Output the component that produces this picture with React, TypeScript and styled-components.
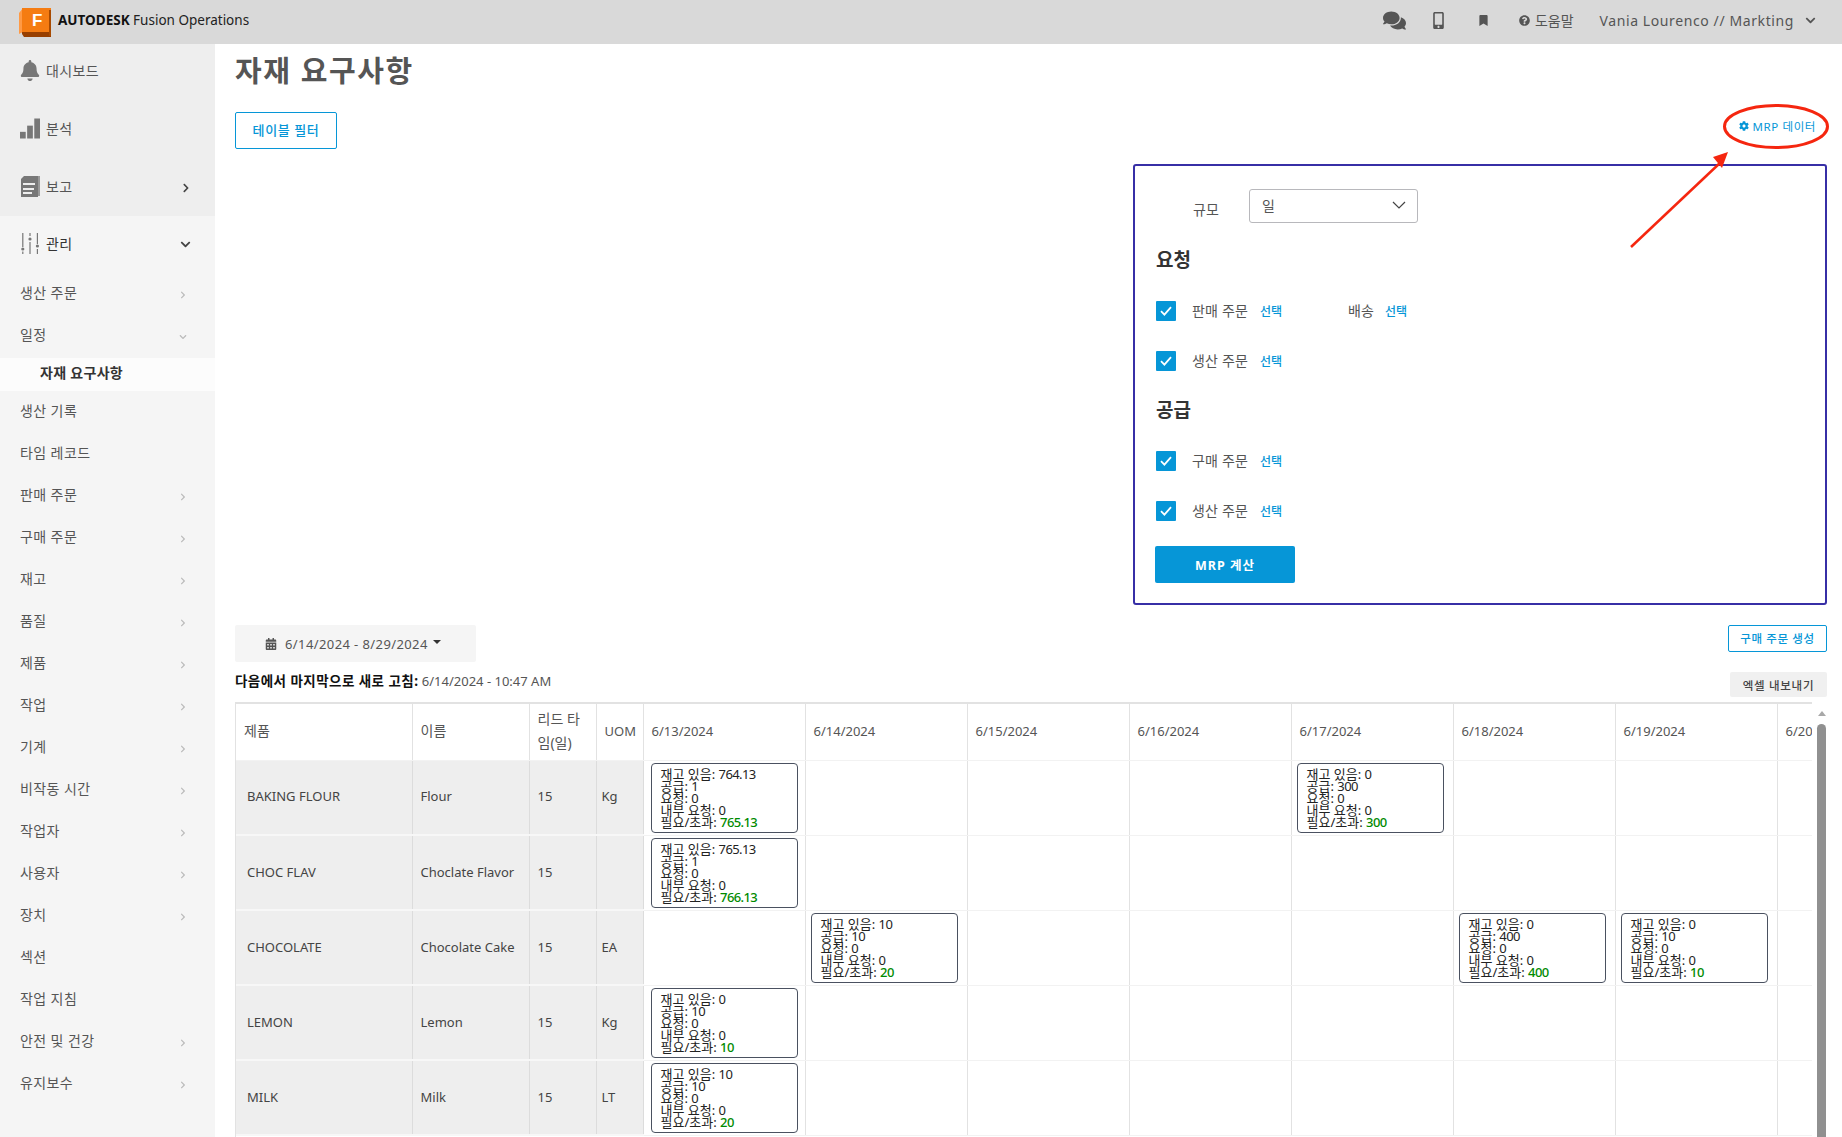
import React from "react";
import styled, { createGlobalStyle } from "styled-components";
import {
  FaBell,
  FaBookmark,
  FaCalendarAlt,
  FaChevronDown,
  FaChevronRight,
  FaCog,
  FaComments,
  FaMobileAlt,
  FaQuestionCircle,
} from "react-icons/fa";

const GlobalStyle = createGlobalStyle`
  html, body {
    margin: 0;
    padding: 0;
    height: 100%;
    overflow: hidden;
    background: #fff;
    font-family: "Noto Sans", "Noto Sans CJK KR", sans-serif;
    color: #555;
  }
  * { box-sizing: border-box; }
`;

const Page = styled.div`
  width: 1842px;
  height: 1137px;
  position: relative;
  overflow: hidden;
  display: flex;
  flex-direction: column;
`;

/* top bar */
const TopBar = styled.header`
  height: 44px;
  flex: none;
  background: #d9d9d9;
  display: flex;
  align-items: center;
  padding-left: 19px;
`;

const Brand = styled.div`
  display: flex;
  align-items: center;
  gap: 7px;
  font-size: 13.5px;
  color: #222;
  white-space: nowrap;
  span {
    padding-bottom: 5px;
  }
  b {
    font-weight: 700;
    color: #111;
  }
`;

const TopActions = styled.div`
  margin-left: auto;
  display: flex;
  align-items: center;
  color: #555;
  padding: 0 26px 4px 0;
`;

const TopIcon = styled.span<{ $gap: number }>`
  display: flex;
  align-items: center;
  margin-right: ${(p) => p.$gap}px;
`;

const HelpLink = styled.span`
  display: flex;
  align-items: center;
  gap: 5px;
  font-size: 14px;
  margin-right: 26px;
`;

const UserName = styled.span`
  font-size: 14px;
  letter-spacing: 0.6px;
  margin-right: 11px;
  white-space: nowrap;
`;

/* sidebar */
const Body = styled.div`
  flex: 1;
  display: flex;
  min-height: 0;
`;

const Sidebar = styled.nav`
  width: 215px;
  flex: none;
  background: #f5f5f5;
  font-size: 14px;
  letter-spacing: 0.4px;
`;

const TopGroup = styled.div`
  height: 172px;
  background: #eeeeee;
`;

const MainItem = styled.div<{ $strong?: boolean }>`
  height: ${(p) => (p.$strong ? 57 : 58)}px;
  padding: 0 24px ${(p) => (p.$strong ? 3 : 6)}px 20px;
  display: flex;
  align-items: center;
  gap: 6px;
  color: ${(p) => (p.$strong ? "#333" : "#555")};
`;

const MainIcon = styled.span`
  width: 20px;
  height: 22px;
  display: flex;
  align-items: center;
  justify-content: center;
  color: #777;
`;

const Chevron = styled.span<{ $faint?: boolean }>`
  margin: ${(p) => (p.$faint ? 5 : 3)}px 0 0 auto;
  display: flex;
  color: ${(p) => (p.$faint ? "#bbb" : "#444")};
`;

const SubItem = styled.div`
  height: 42px;
  padding: 0 28px 4px 20px;
  display: flex;
  align-items: center;
`;

const ActiveSub = styled.div`
  height: 33px;
  margin-top: 1px;
  padding: 0 0 6px 40px;
  background: #fcfcfc;
  display: flex;
  align-items: center;
  font-weight: 700;
  font-size: 14px;
  letter-spacing: 0.3px;
  color: #333;
`;

/* content */
const Main = styled.main`
  flex: 1;
  min-width: 0;
  padding: 6px 15px 0 20px;
`;

const Title = styled.h1`
  margin: 0;
  height: 40px;
  line-height: 42px;
  font-size: 29px;
  font-weight: 700;
  letter-spacing: 1.6px;
  color: #555;
`;

const FilterRow = styled.div`
  margin-top: 22px;
  display: flex;
  justify-content: space-between;
`;

const OutlineButton = styled.button<{ $h: number; $w: number; $size: number }>`
  width: ${(p) => p.$w}px;
  height: ${(p) => p.$h}px;
  padding: 0 0 2px;
  background: #fff;
  border: 1px solid #0696d7;
  border-radius: 2px;
  color: #0696d7;
  font-family: inherit;
  font-size: ${(p) => p.$size}px;
  font-weight: 500;
  letter-spacing: 0.6px;
`;

const DataLink = styled.span`
  display: flex;
  align-items: center;
  gap: 4px;
  height: 28px;
  padding-right: 11px;
  font-size: 11.5px;
  letter-spacing: 0.6px;
  color: #0696d7;
`;

const PanelRow = styled.div`
  margin-top: 15px;
  display: flex;
  justify-content: flex-end;
`;

const Panel = styled.section`
  width: 694px;
  height: 441px;
  border: 2px solid #372fa6;
  border-radius: 3px;
  padding: 23px 0 0 21px;
`;

const ScaleRow = styled.div`
  display: flex;
  height: 34px;
`;

const ScaleLabel = styled.span`
  margin: 10px 0 0 37px;
  width: 56px;
  font-size: 14px;
  line-height: 22px;
`;

const Select = styled.div`
  width: 169px;
  height: 34px;
  padding: 0 11px 2px 12px;
  border: 1px solid #b8b8bc;
  border-radius: 3px;
  display: flex;
  align-items: center;
  justify-content: space-between;
  font-size: 14px;
`;

const SectionHead = styled.h3<{ $top: number }>`
  margin: ${(p) => p.$top}px 0 0;
  height: 24px;
  line-height: 26px;
  font-size: 19px;
  font-weight: 700;
  color: #333;
`;

const CheckRow = styled.div`
  margin-top: 30px;
  height: 20px;
  display: flex;
  align-items: center;
  font-size: 14px;
`;

const CheckBox = styled.span`
  width: 20px;
  height: 20px;
  margin-right: 16px;
  background: #0696d7;
  border-radius: 1px;
  display: flex;
  align-items: center;
  justify-content: center;
`;

const CheckLabel = styled.span<{ $w: number }>`
  width: ${(p) => p.$w}px;
  flex: none;
  padding-bottom: 2px;
  letter-spacing: 0.2px;
`;

const SelectLink = styled.span<{ $w?: number }>`
  flex: none;
  width: ${(p) => (p.$w ? `${p.$w}px` : "auto")};
  padding-bottom: 1px;
  font-size: 12px;
  font-weight: 500;
  color: #0696d7;
`;

const CalcButton = styled.button`
  display: block;
  margin: 25px 0 0 -1px;
  width: 140px;
  height: 37px;
  background: #0696d7;
  border: 0;
  border-radius: 2px;
  color: #fff;
  font-family: inherit;
  font-size: 12.5px;
  font-weight: 700;
  letter-spacing: 1px;
`;

const DateRow = styled.div`
  margin-top: 20px;
  display: flex;
  justify-content: space-between;
  align-items: flex-start;
`;

const DateButton = styled.div`
  width: 241px;
  height: 37px;
  padding-left: 30px;
  background: #f5f5f5;
  border-radius: 2px;
  display: flex;
  align-items: center;
  gap: 8px;
  font-size: 13px;
  letter-spacing: 0.4px;
  color: #555;
`;

const Caret = styled.span`
  width: 0;
  height: 0;
  margin: -3px 0 0 -3px;
  border-left: 4px solid transparent;
  border-right: 4px solid transparent;
  border-top: 4px solid #333;
`;

const RefreshRow = styled.div`
  margin-top: 10px;
  height: 30px;
  display: flex;
  justify-content: space-between;
  align-items: flex-start;
`;

const RefreshText = styled.div`
  font-size: 13px;
  line-height: 18px;
  color: #555;
  b {
    font-size: 13.5px;
    font-weight: 700;
    letter-spacing: 0.45px;
    color: #111;
  }
`;

const ExportButton = styled.button`
  width: 97px;
  height: 25px;
  padding: 0;
  background: #f0f0f0;
  border: 0;
  border-radius: 2px;
  color: #444;
  font-family: inherit;
  font-size: 11.5px;
  font-weight: 500;
  letter-spacing: 0.7px;
`;

/* table */
const TableWrap = styled.div`
  display: flex;
  height: 440px;
`;

const TableClip = styled.div`
  width: 1577px;
  flex: none;
  overflow: hidden;
  border-top: 2px solid #e2e2e2;
  border-left: 1px solid #e2e2e2;
`;

const Table = styled.table`
  width: 1703px;
  table-layout: fixed;
  border-collapse: collapse;
  font-size: 13px;
  color: #444;
`;

const Th = styled.th<{ $w: number; $latin?: boolean }>`
  width: ${(p) => p.$w}px;
  height: 56px;
  padding: 0 6px 2px 8px;
  text-align: left;
  font-weight: 400;
  font-size: ${(p) => (p.$latin ? 13 : 14)}px;
  line-height: 24px;
  color: #555;
  white-space: normal;
  border-right: 1px solid #e2e2e2;
  border-bottom: 1px solid #f2f2f2;
`;

const InfoCell = styled.td<{ $pad?: number }>`
  height: 75px;
  padding: 0 0 2px ${(p) => p.$pad ?? 8}px;
  background: #eeeeee;
  border-right: 1px solid #dcdcdc;
  border-bottom: 2px solid #f7f7f7;
  white-space: nowrap;
`;

const DayCell = styled.td<{ $first: boolean }>`
  height: 75px;
  padding: 2px 0 0 ${(p) => (p.$first ? 7 : 5)}px;
  vertical-align: top;
  border-right: 1px solid #e2e2e2;
  border-bottom: 1px solid #f2f2f2;
`;

const Card = styled.div`
  width: 147px;
  height: 70px;
  padding: 4px 0 0 9px;
  border: 1px solid #4a5160;
  border-radius: 4px;
  font-size: 13px;
  line-height: 12px;
  color: #222;
`;

const Value = styled.span`
  letter-spacing: -0.6px;
`;

const Needed = styled(Value)`
  font-weight: 500;
  color: #008a00;
`;

const ScrollTrack = styled.div`
  width: 15px;
  flex: none;
  padding: 9px 1px 0 5px;
  display: flex;
  flex-direction: column;
  align-items: center;
`;

const ScrollUp = styled.span`
  width: 0;
  height: 0;
  border-left: 4px solid transparent;
  border-right: 4px solid transparent;
  border-bottom: 5px solid #a8a8a8;
`;

const ScrollThumb = styled.div`
  margin-top: 8px;
  width: 9px;
  height: 420px;
  background: #909090;
  border-radius: 5px 5px 0 0;
`;

/* red markup drawn over the page */
const Markup = styled.svg`
  position: absolute;
  left: 1600px;
  top: 90px;
`;

const BarsIcon = () => (
  <svg width="21" height="21" viewBox="0 0 21 21" fill="#777">
    <rect x="0" y="14" width="6" height="7" />
    <rect x="7.5" y="7.5" width="6" height="13.5" />
    <rect x="15" y="0" width="6" height="21" />
  </svg>
);

const ReportIcon = () => (
  <svg width="19" height="21" viewBox="0 0 19 21">
    <path d="M4 0h15v20h-2V2H4z" fill="#999" />
    <path d="M0 3l3-3h14v21H0z" fill="#777" />
    <path d="M2 7h12v2H2zM2 12h11v2H2zM2 16h9v2H2z" fill="#eee" />
  </svg>
);

const SlidersIcon = () => (
  <svg width="18" height="21" viewBox="0 0 18 21" fill="#777">
    <rect x="1.2" y="0" width="1.2" height="14" />
    <circle cx="1.8" cy="16" r="1.6" />
    <rect x="1.2" y="18.5" width="1.2" height="2.5" />
    <rect x="8.4" y="0" width="1.2" height="3" />
    <circle cx="9" cy="6" r="1.6" />
    <rect x="8.4" y="9" width="1.2" height="12" />
    <rect x="15.8" y="0" width="1.2" height="11" />
    <circle cx="16.4" cy="13" r="1.6" />
    <rect x="15.8" y="16" width="1.2" height="5" />
  </svg>
);

const Logo = () => (
  <svg width="32" height="29" viewBox="0 0 32 29">
    <path d="M0 5l4-5v24l-4 2z" fill="#ff9a45" />
    <rect x="3" y="0" width="29" height="25" fill="#f57c12" />
    <path d="M3 24h29v5H5l-2-3z" fill="#983f00" />
    <rect x="30" y="2" width="2" height="26" fill="#a84a00" />
    <text x="13" y="17.5" fontSize="17" fontWeight="700" fill="#fff" fontFamily="Liberation Sans, sans-serif">
      F
    </text>
  </svg>
);

const Tick = () => (
  <svg width="12" height="10" viewBox="0 0 12 10" fill="none" stroke="#fff" strokeWidth="1.8">
    <path d="M1 5.2l3.4 3.4L11 1.2" />
  </svg>
);

const SmallDown = () => (
  <svg width="14" height="8" viewBox="0 0 14 8" fill="none" stroke="#444" strokeWidth="1.2">
    <path d="M1 1l6 6 6-6" />
  </svg>
);

type SubEntry = { label: string; arrow?: "right" | "down"; active?: boolean };

const subItems: SubEntry[] = [
  { label: "생산 주문", arrow: "right" },
  { label: "일정", arrow: "down" },
  { label: "자재 요구사항", active: true },
  { label: "생산 기록" },
  { label: "타임 레코드" },
  { label: "판매 주문", arrow: "right" },
  { label: "구매 주문", arrow: "right" },
  { label: "재고", arrow: "right" },
  { label: "품질", arrow: "right" },
  { label: "제품", arrow: "right" },
  { label: "작업", arrow: "right" },
  { label: "기계", arrow: "right" },
  { label: "비작동 시간", arrow: "right" },
  { label: "작업자", arrow: "right" },
  { label: "사용자", arrow: "right" },
  { label: "장치", arrow: "right" },
  { label: "섹션" },
  { label: "작업 지침" },
  { label: "안전 및 건강", arrow: "right" },
  { label: "유지보수", arrow: "right" },
];

const dates = ["6/13/2024", "6/14/2024", "6/15/2024", "6/16/2024", "6/17/2024", "6/18/2024", "6/19/2024", "6/20/2024"];

type CardData = { stock: string; supply: string; need: string };
type RowData = { sku: string; name: string; uom: string; cards: Record<number, CardData> };

const rows: RowData[] = [
  {
    sku: "BAKING FLOUR",
    name: "Flour",
    uom: "Kg",
    cards: {
      0: { stock: "764.13", supply: "1", need: "765.13" },
      4: { stock: "0", supply: "300", need: "300" },
    },
  },
  {
    sku: "CHOC FLAV",
    name: "Choclate Flavor",
    uom: "",
    cards: { 0: { stock: "765.13", supply: "1", need: "766.13" } },
  },
  {
    sku: "CHOCOLATE",
    name: "Chocolate Cake",
    uom: "EA",
    cards: {
      1: { stock: "10", supply: "10", need: "20" },
      5: { stock: "0", supply: "400", need: "400" },
      6: { stock: "0", supply: "10", need: "10" },
    },
  },
  {
    sku: "LEMON",
    name: "Lemon",
    uom: "Kg",
    cards: { 0: { stock: "0", supply: "10", need: "10" } },
  },
  {
    sku: "MILK",
    name: "Milk",
    uom: "LT",
    cards: { 0: { stock: "10", supply: "10", need: "20" } },
  },
];

const MrpCard = ({ data }: { data: CardData }) => (
  <Card>
    재고 있음: <Value>{data.stock}</Value>
    <br />
    공급: <Value>{data.supply}</Value>
    <br />
    요청: <Value>0</Value>
    <br />
    내부 요청: <Value>0</Value>
    <br />
    필요/초과: <Needed>{data.need}</Needed>
  </Card>
);

const CheckLine = ({ label }: { label: string }) => (
  <CheckRow>
    <CheckBox>
      <Tick />
    </CheckBox>
    <CheckLabel $w={68}>{label}</CheckLabel>
    <SelectLink>선택</SelectLink>
  </CheckRow>
);

export default function App() {
  return (
    <Page>
      <GlobalStyle />
      <TopBar>
        <Brand>
          <Logo />
          <span>
            <b>AUTODESK</b> Fusion Operations
          </span>
        </Brand>
        <TopActions>
          <TopIcon $gap={24}>
            <FaComments size={23} />
          </TopIcon>
          <TopIcon $gap={31}>
            <FaMobileAlt size={17} />
          </TopIcon>
          <TopIcon $gap={30}>
            <FaBookmark size={11} />
          </TopIcon>
          <HelpLink>
            <FaQuestionCircle size={11} />
            도움말
          </HelpLink>
          <UserName>Vania Lourenco // Markting</UserName>
          <FaChevronDown size={11} />
        </TopActions>
      </TopBar>

      <Body>
        <Sidebar>
          <TopGroup>
            <MainItem>
              <MainIcon>
                <FaBell size={21} />
              </MainIcon>
              대시보드
            </MainItem>
            <MainItem>
              <MainIcon>
                <BarsIcon />
              </MainIcon>
              분석
            </MainItem>
            <MainItem>
              <MainIcon>
                <ReportIcon />
              </MainIcon>
              보고
              <Chevron>
                <FaChevronRight size={10} />
              </Chevron>
            </MainItem>
          </TopGroup>
          <MainItem $strong>
            <MainIcon>
              <SlidersIcon />
            </MainIcon>
            관리
            <Chevron>
              <FaChevronDown size={11} />
            </Chevron>
          </MainItem>
          {subItems.map((item) =>
            item.active ? (
              <ActiveSub key={item.label}>{item.label}</ActiveSub>
            ) : (
              <SubItem key={item.label}>
                {item.label}
                {item.arrow && (
                  <Chevron $faint>
                    {item.arrow === "right" ? <FaChevronRight size={8} /> : <FaChevronDown size={8} />}
                  </Chevron>
                )}
              </SubItem>
            )
          )}
        </Sidebar>

        <Main>
          <Title>자재 요구사항</Title>
          <FilterRow>
            <OutlineButton $w={102} $h={37} $size={13}>
              테이블 필터
            </OutlineButton>
            <DataLink>
              <FaCog size={10} />
              MRP 데이터
            </DataLink>
          </FilterRow>

          <PanelRow>
            <Panel>
              <ScaleRow>
                <ScaleLabel>규모</ScaleLabel>
                <Select>
                  일
                  <SmallDown />
                </Select>
              </ScaleRow>
              <SectionHead $top={24}>요청</SectionHead>
              <CheckRow>
                <CheckBox>
                  <Tick />
                </CheckBox>
                <CheckLabel $w={68}>판매 주문</CheckLabel>
                <SelectLink $w={88}>선택</SelectLink>
                <CheckLabel $w={37}>배송</CheckLabel>
                <SelectLink>선택</SelectLink>
              </CheckRow>
              <CheckLine label="생산 주문" />
              <SectionHead $top={26}>공급</SectionHead>
              <CheckLine label="구매 주문" />
              <CheckLine label="생산 주문" />
              <CalcButton>MRP 계산</CalcButton>
            </Panel>
          </PanelRow>

          <DateRow>
            <DateButton>
              <FaCalendarAlt size={12} />
              6/14/2024 - 8/29/2024
              <Caret />
            </DateButton>
            <OutlineButton $w={99} $h={27} $size={11.5}>
              구매 주문 생성
            </OutlineButton>
          </DateRow>

          <RefreshRow>
            <RefreshText>
              <b>다음에서 마지막으로 새로 고침:</b> 6/14/2024 - 10:47 AM
            </RefreshText>
            <ExportButton>엑셀 내보내기</ExportButton>
          </RefreshRow>

          <TableWrap>
            <TableClip>
              <Table>
                <thead>
                  <tr>
                    <Th $w={176}>제품</Th>
                    <Th $w={117}>이름</Th>
                    <Th $w={67}>리드 타임(일)</Th>
                    <Th $w={47} $latin>
                      UOM
                    </Th>
                    {dates.map((d) => (
                      <Th key={d} $w={162} $latin>
                        {d}
                      </Th>
                    ))}
                  </tr>
                </thead>
                <tbody>
                  {rows.map((row) => (
                    <tr key={row.sku}>
                      <InfoCell $pad={11}>{row.sku}</InfoCell>
                      <InfoCell>{row.name}</InfoCell>
                      <InfoCell>15</InfoCell>
                      <InfoCell $pad={5}>{row.uom}</InfoCell>
                      {dates.map((d, i) => (
                        <DayCell key={d} $first={i === 0}>
                          {row.cards[i] && <MrpCard data={row.cards[i]} />}
                        </DayCell>
                      ))}
                    </tr>
                  ))}
                </tbody>
              </Table>
            </TableClip>
            <ScrollTrack>
              <ScrollUp />
              <ScrollThumb />
            </ScrollTrack>
          </TableWrap>
        </Main>
      </Body>

      <Markup width="240" height="170" viewBox="0 0 240 170">
        <ellipse cx="176" cy="36.5" rx="51.5" ry="21" fill="none" stroke="#f5260f" strokeWidth="3" />
        <path d="M31 157L121 72" stroke="#f5260f" strokeWidth="2.5" fill="none" />
        <path d="M128 62l-15 5 9 11z" fill="#f5260f" />
      </Markup>
    </Page>
  );
}
